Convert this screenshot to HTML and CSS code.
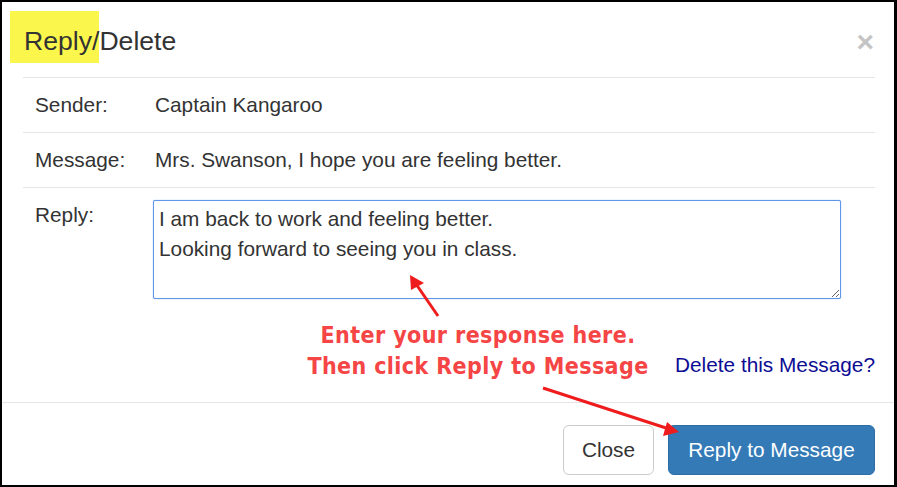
FILE: index.html
```html
<!DOCTYPE html>
<html lang="en">
<head>
    <meta charset="UTF-8">
    <title>Reply/Delete</title>
    <link rel="stylesheet" href="styles.css">
</head>
<body>

    <div class="frame">

        <div class="modal-header">
            <h4 class="modal-title"><span class="marker">Reply/</span>Delete</h4>
            <span class="close">&times;</span>
        </div>

        <div class="modal-body">
            <div class="row">
                <div class="label">Sender:</div>
                <div class="value">Captain Kangaroo</div>
            </div>
            <div class="row">
                <div class="label">Message:</div>
                <div class="value">Mrs. Swanson, I hope you are feeling better.</div>
            </div>
            <div class="row last">
                <div class="label">Reply:</div>
                <div class="value field">
                    <textarea class="reply-box">I am back to work and feeling better.
Looking forward to seeing you in class.</textarea>
                </div>
            </div>
            <div class="notes">
                <a class="delete-link">Delete this Message?</a>
            </div>
        </div>

        <div class="modal-footer">
            <button class="btn btn-default">Close</button>
            <button class="btn btn-primary">Reply to Message</button>
        </div>

        <!-- annotations drawn over the dialog -->
        <div class="callout">Enter your response here.<br>Then click Reply to Message</div>

        <svg class="arrows" width="897" height="487" viewBox="0 0 897 487">
            <line x1="438" y1="316" x2="416" y2="284" stroke="#ee1c1c" stroke-width="3"/>
            <polygon points="410,275 424,283 411,290" fill="#ee1c1c"/>
            <line x1="543" y1="388" x2="666" y2="428" stroke="#ee1c1c" stroke-width="3"/>
            <polygon points="679,432 663,436 667,422" fill="#ee1c1c"/>
        </svg>

    </div>

</body>
</html>
```

FILE: styles.css
```css
body {
    margin: 0;
    padding: 0;
    background-color: #000;
    font-family: "Liberation Sans", Arial, sans-serif;
    color: #333;
}

*,
*::before,
*::after {
    box-sizing: border-box;
}

.frame {
    width: 897px;
    height: 487px;
    border-style: solid;
    border-color: #000;
    border-width: 2px 3px 2px 2px;
    background-color: #fff;
    position: relative;
    overflow: hidden;
}

.modal-header {
    margin: 0 19px 0 21px;
    height: 76px;
    border-bottom: 1px solid #e5e5e5;
    display: flex;
    align-items: center;
    justify-content: space-between;
    padding-top: 4px;
}

.modal-title {
    margin: 0 0 0 1px;
    font-size: 26.6px;
    font-weight: normal;
    line-height: 1.1;
}

.marker {
    background-color: #fbf64c;
    padding: 15px 0 7px 14px;
    margin-left: -14px;
}

.close {
    font-size: 30px;
    font-weight: bold;
    line-height: 1;
    color: #c4c4c4;
    margin-right: 1px;
}

.modal-body {
    margin: 0 19px 0 21px;
    font-size: 20.8px;
    line-height: 30px;
}

.row {
    display: flex;
    padding: 12px 0;
    border-bottom: 1px solid #e5e5e5;
}

.row.last {
    border-bottom: none;
}

.label {
    width: 130px;
    padding-left: 12px;
    flex-shrink: 0;
}

.value {
    flex: 1;
    padding-left: 2px;
}

.value.field {
    padding-left: 0;
    padding-right: 34px;
}

.reply-box {
    display: block;
    width: 100%;
    height: 99px;
    margin: 0;
    padding: 3px 5px;
    border: 1px solid #5f96ea;
    border-radius: 2px;
    box-shadow: 0 0 1px #5f96ea;
    font-family: inherit;
    font-size: 20.8px;
    line-height: 30px;
    color: #333;
    outline: none;
}

.notes {
    text-align: right;
    padding: 39px 0 22px;
}

.delete-link {
    color: #0c0c94;
}

.modal-footer {
    border-top: 1px solid #e5e5e5;
    padding: 22px 19px 0 0;
    display: flex;
    justify-content: flex-end;
    gap: 14px;
}

.btn {
    width: 91px;
    height: 50px;
    margin: 0;
    padding: 0;
    font-family: inherit;
    font-size: 20.8px;
    line-height: 48px;
    text-align: center;
    border-radius: 6px;
    border: 1px solid #ccc;
    background-color: #fff;
    color: #333;
}

.btn-primary {
    width: 207px;
    background-color: #337ab7;
    border-color: #2e6da4;
    color: #fff;
}

.callout {
    position: absolute;
    left: 276px;
    top: 318px;
    width: 400px;
    text-align: center;
    font-family: "DejaVu Sans Condensed", "DejaVu Sans", sans-serif;
    font-stretch: condensed;
    font-weight: bold;
    font-size: 23px;
    line-height: 31px;
    letter-spacing: 0.4px;
    color: #f64545;
}

.arrows {
    position: absolute;
    left: -2px;
    top: -2px;
    pointer-events: none;
}
```
